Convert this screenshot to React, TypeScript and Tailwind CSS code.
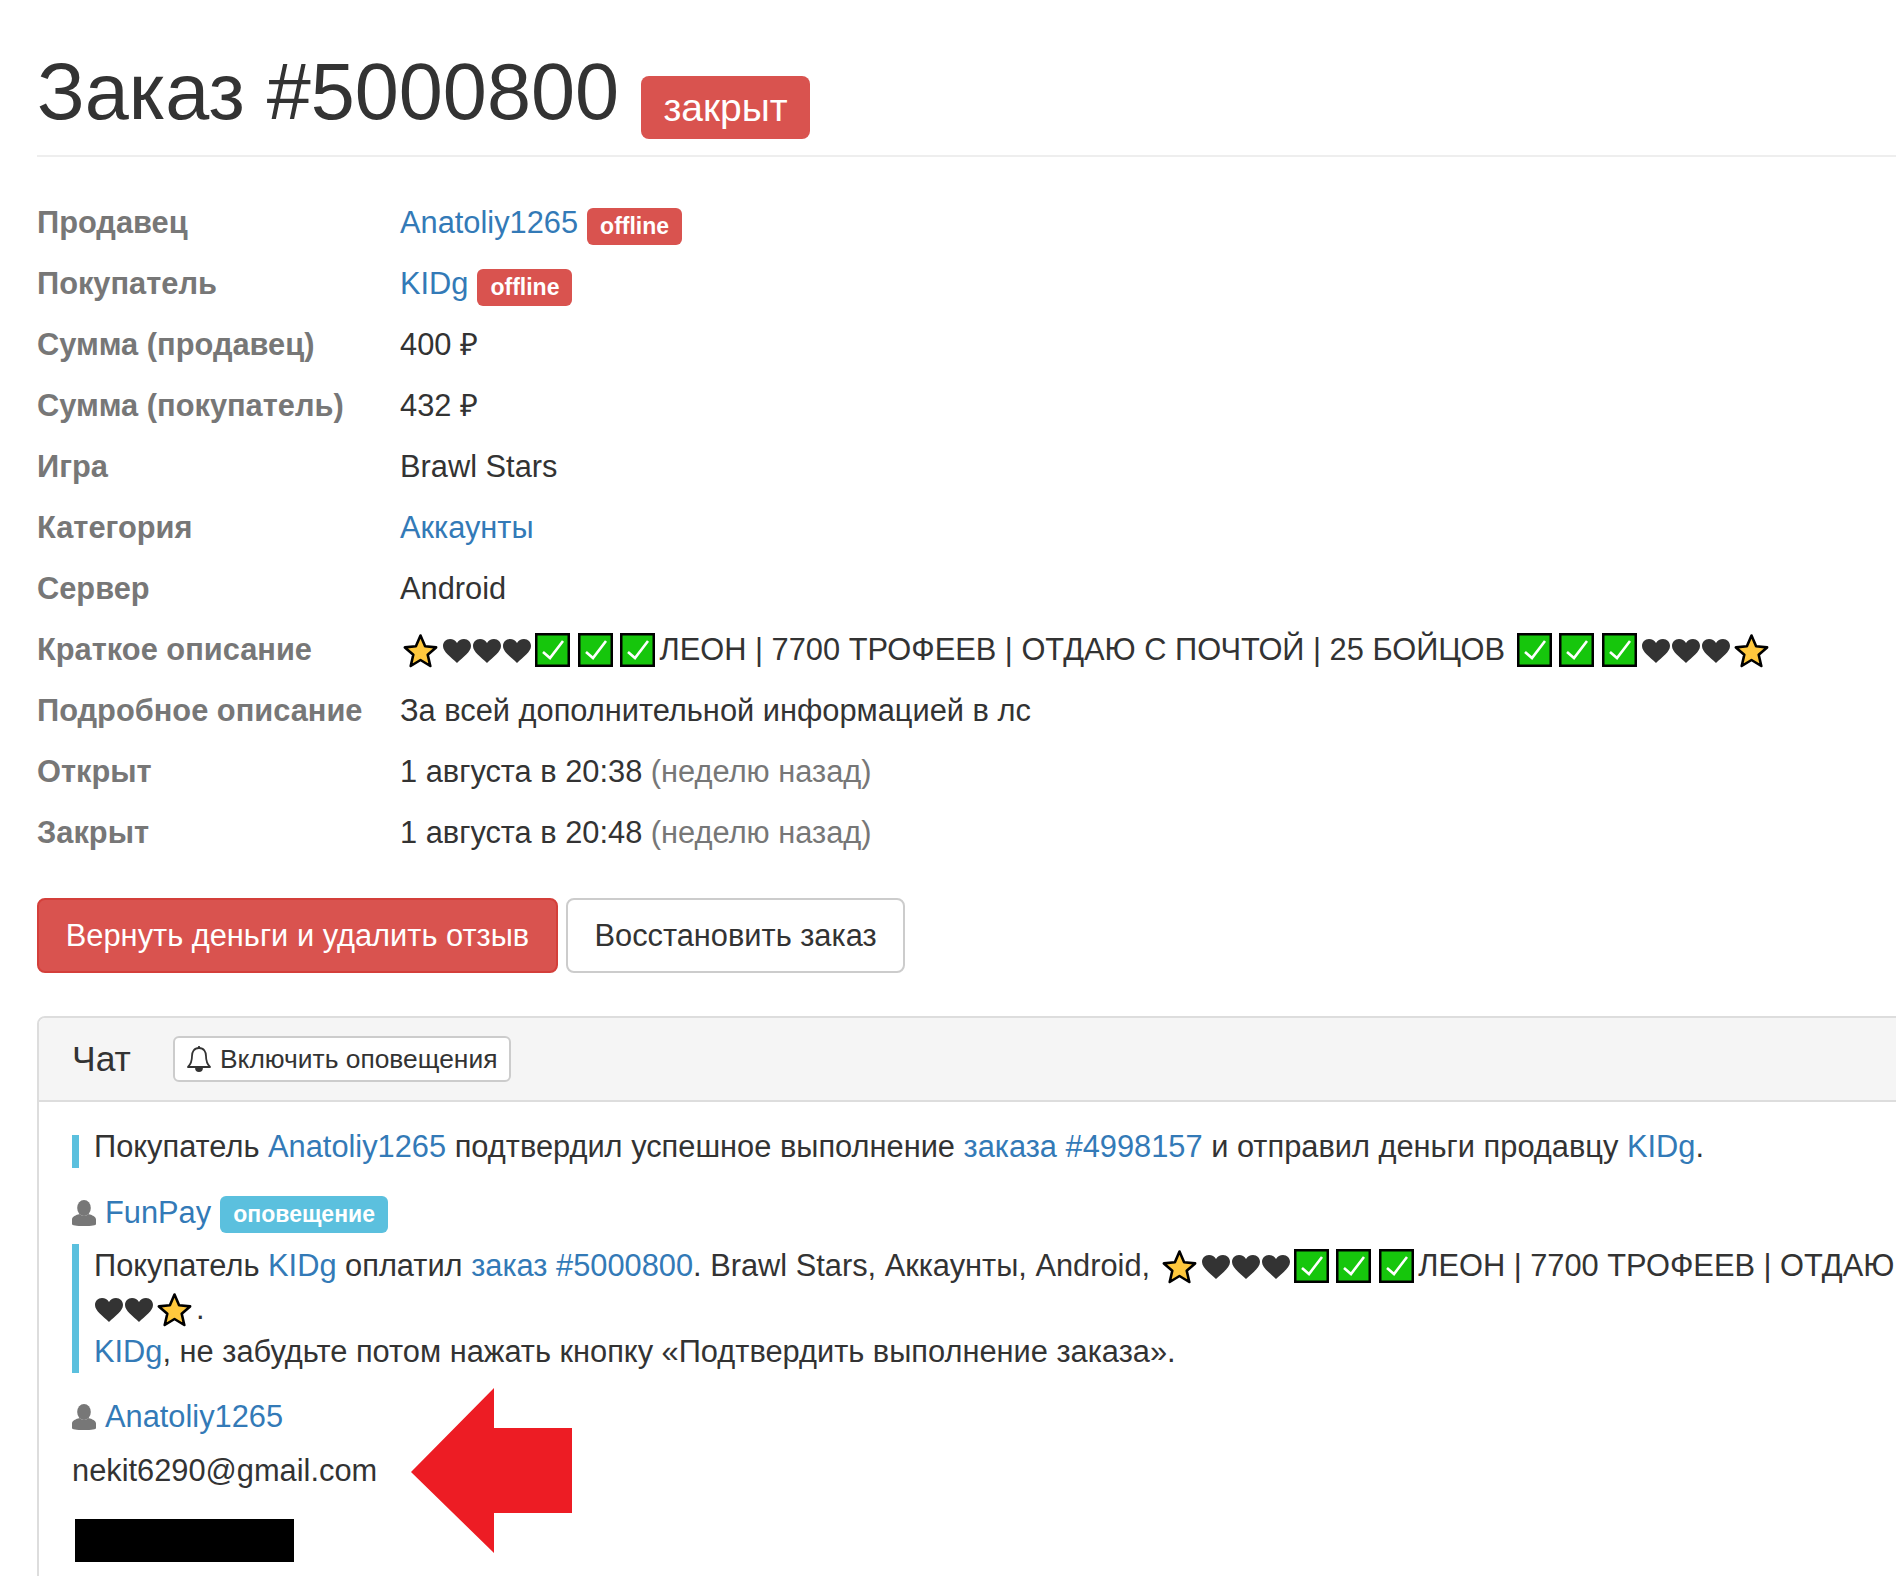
import React from "react";

const Star = () => (
  <svg viewBox="0 0 34 34" className="inline-block w-[35px] h-[34px] ml-[3px] mr-[4px] align-[-8px]">
    <path d="M17 1.5 L21.6 12.2 L32.6 13.4 L24.2 20.8 L26.8 32 L17 26 L7.2 32 L9.8 20.8 L1.4 13.4 L12.4 12.2 Z" fill="#ffc83d" stroke="#000" strokeWidth="2.6" strokeLinejoin="round" />
  </svg>
);
const Heart = () => (
  <svg viewBox="0 0 30 24" className="inline-block w-[30px] h-[24px] align-[-3px]">
    <path d="M15 24 C9 18 1 13 1 7 C1 3 4 0 8 0 C11 0 13.5 1.5 15 4 C16.5 1.5 19 0 22 0 C26 0 29 3 29 7 C29 13 21 18 15 24 Z" fill="#333" />
  </svg>
);
const Check = () => (
  <span className="inline-block w-[42.5px] align-[-7px]">
    <svg viewBox="0 0 35 34" className="block w-[35px] h-[34px] ml-[3px]">
      <rect x="1.25" y="1.25" width="32.5" height="31.5" fill="#16c60c" stroke="#000" strokeWidth="2.5" />
      <path d="M8 19 L15 25 L28 8" fill="none" stroke="#fff" strokeWidth="2.6" />
    </svg>
  </span>
);
const User = () => (
  <svg viewBox="0 0 24 26" className="w-[24px] h-[26px] shrink-0">
    <ellipse cx="12" cy="8" rx="6.8" ry="8" fill="#777" />
    <path d="M0 26 L0 19.5 C0 16.5 4 15 7.5 14 C10 16.5 14 16.5 16.5 14 C20 15 24 16.5 24 19.5 L24 24 C24 25.5 20 26 12 26 C4 26 0 25.5 0 24 Z" fill="#777" />
  </svg>
);
const Bell = () => (
  <svg viewBox="0 0 26 28" className="w-[26px] h-[28px] shrink-0" fill="none" stroke="#333" strokeWidth="1.8" strokeLinejoin="round">
    <path d="M13 3 C8 3 6 7 6 11 C6 17 4 20 2 22 L24 22 C22 20 20 17 20 11 C20 7 18 3 13 3 Z" />
    <path d="M13 1 L13 3" />
    <path d="M10 23 C10 27 16 27 16 23 Z" fill="#333" />
  </svg>
);

const A = ({ children }: { children: React.ReactNode }) => <a className="text-[#337ab7]">{children}</a>;
const Offline = () => (
  <span className="inline-flex items-center justify-center w-[95px] h-[37px] ml-[9px] mt-[7px] rounded-[6px] bg-[#d9534f] text-white font-bold text-[23px] leading-none">offline</span>
);

const Row = ({ label, children }: { label: string; children: React.ReactNode }) => (
  <div className="flex items-center h-[61px]">
    <div className="w-[363px] shrink-0 font-bold text-[#777]">{label}</div>
    <div className="flex items-center whitespace-nowrap">{children}</div>
  </div>
);

const Emojis = () => (
  <>
    <Star /><Heart /><Heart /><Heart /><Check /><Check /><Check />
    ЛЕОН | 7700 ТРОФЕЕВ | ОТДАЮ С ПОЧТОЙ | 25 БОЙЦОВ{" "}
    <Check /><Check /><Check /><Heart /><Heart /><Heart /><Star />
  </>
);

export default function App() {
  return (
    <div className="relative w-[1896px] h-[1576px] overflow-hidden bg-white text-[#333] text-[30.8px] leading-[44px] font-['Liberation_Sans',Arial,sans-serif]">
      <div className="w-[2600px] pl-[37px]">
        <div className="flex items-center h-[157px] pt-[28px] border-b-2 border-[#eee]">
          <h1 className="text-[79.2px] leading-[88px] font-normal">Заказ #5000800</h1>
          <span className="inline-flex items-center justify-center w-[169px] h-[63px] ml-[22px] mt-[31px] rounded-[8px] bg-[#d9534f] text-white text-[39px] leading-none">закрыт</span>
        </div>

        <div className="pt-[35px]">
          <Row label="Продавец"><A>Anatoliy1265</A><Offline /></Row>
          <Row label="Покупатель"><A>KIDg</A><Offline /></Row>
          <Row label="Сумма (продавец)">400 ₽</Row>
          <Row label="Сумма (покупатель)">432 ₽</Row>
          <Row label="Игра">Brawl Stars</Row>
          <Row label="Категория"><A>Аккаунты</A></Row>
          <Row label="Сервер">Android</Row>
          <Row label="Краткое описание"><span><Emojis /></span></Row>
          <Row label="Подробное описание">За всей дополнительной информацией в лс</Row>
          <Row label="Открыт">1 августа в 20:38&nbsp;<span className="text-[#777]">(неделю назад)</span></Row>
          <Row label="Закрыт">1 августа в 20:48&nbsp;<span className="text-[#777]">(неделю назад)</span></Row>
        </div>

        <div className="flex gap-[8px] mt-[35px]">
          <button className="w-[521px] h-[75px] rounded-[8px] border-2 border-[#d43f3a] bg-[#d9534f] text-white">Вернуть деньги и удалить отзыв</button>
          <button className="w-[339px] h-[75px] rounded-[8px] border-2 border-[#ccc] bg-white">Восстановить заказ</button>
        </div>

        <div className="mt-[43px] h-[600px] rounded-tl-[8px] border-2 border-[#ddd]">
          <div className="flex items-center h-[84px] px-[33px] bg-[#f5f5f5] border-b-2 border-[#ddd] rounded-tl-[6px]">
            <span className="text-[35.5px] w-[101px]">Чат</span>
            <button className="flex items-center w-[338px] h-[46px] pl-[11px] rounded-[6px] border-2 border-[#ccc] bg-white text-[26.4px] leading-none">
              <Bell /><span className="ml-[8px]">Включить оповещения</span>
            </button>
          </div>

          <div className="px-[33px] pt-[33px]">
            <div className="border-l-[7px] border-[#5bc0de] pl-[15px] h-[33px] leading-[24px]">
              Покупатель <A>Anatoliy1265</A> подтвердил успешное выполнение <A>заказа #4998157</A> и отправил деньги продавцу <A>KIDg</A>.
            </div>

            <div className="flex items-center h-[44px] mt-[23px]">
              <User />
              <span className="ml-[9px]"><A>FunPay</A></span>
              <span className="inline-flex items-center justify-center w-[168px] h-[37px] ml-[9px] mt-[3px] rounded-[6px] bg-[#5bc0de] text-white font-bold text-[23px] leading-none">оповещение</span>
            </div>

            <div className="border-l-[7px] border-[#5bc0de] pl-[15px] mt-[9px] h-[129px] leading-[43px] whitespace-nowrap">
              Покупатель <A>KIDg</A> оплатил <A>заказ #5000800</A>. Brawl Stars, Аккаунты, Android, <Star /><Heart /><Heart /><Heart /><Check /><Check /><Check />ЛЕОН | 7700 ТРОФЕЕВ | ОТДАЮ С ПОЧТОЙ | 25 БОЙЦОВ <Check /><Check /><Check /><Heart />
              <br />
              <Heart /><Heart /><Star />.
              <br />
              <A>KIDg</A>, не забудьте потом нажать кнопку «Подтвердить выполнение заказа».
            </div>

            <div className="flex items-center h-[44px] mt-[22px]">
              <User />
              <span className="ml-[9px]"><A>Anatoliy1265</A></span>
            </div>

            <div className="mt-[10px] h-[44px]">nekit6290@gmail.com</div>
            <div className="ml-[3px] mt-[26px] w-[219px] h-[43px] bg-black" />
          </div>
        </div>
      </div>

      <svg viewBox="0 0 161 165" className="absolute left-[411px] top-[1388px] w-[161px] h-[165px]">
        <path d="M83 0 L83 40 L161 40 L161 125 L83 125 L83 165 L0 84 Z" fill="#ed1c24" />
      </svg>
    </div>
  );
}
